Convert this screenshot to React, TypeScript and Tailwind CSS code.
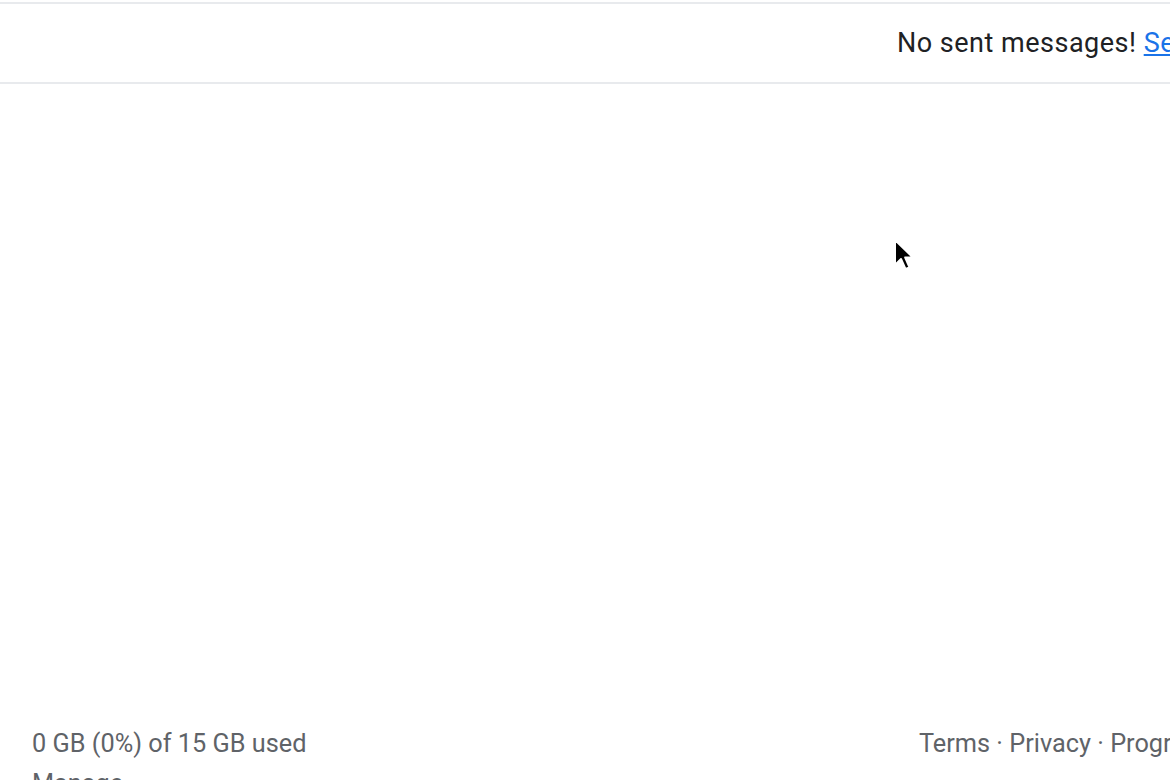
import React from 'react';

const font = { fontFamily: 'Roboto, "Noto Sans", Arial, sans-serif' };

function Cursor() {
  return (
    <svg className="absolute left-[893px] top-[238px]" width="24" height="36" viewBox="0 0 24 36">
      <path d="M2 2 L2 27 L8 21 L12.5 31 L16.5 29.3 L12.2 19.5 L20 19.5 Z" fill="#000" stroke="#fff" strokeWidth="2" strokeLinejoin="round" />
    </svg>
  );
}

export default function App() {
  return (
    <div className="relative w-[1170px] h-[780px] overflow-hidden bg-white" style={font}>
      <div className="h-[2px]" />
      <div className="h-[82px] border-t-2 border-b-2 border-[#e8eaed] flex items-center overflow-hidden">
        <p className="pl-[897px] whitespace-nowrap text-[27px] tracking-[0.5px] text-[#202124]">
          No sent messages!{' '}
          <a href="#" className="text-[#1a73e8] underline">Send one now</a>
        </p>
      </div>
      <div className="h-[640px]" />
      <div className="relative flex whitespace-nowrap text-[25.3px] text-[#5f6368] leading-[40px]">
        <div className="pl-[32px]">
          <p>0 GB (0%) of 15 GB used</p>
          <p>Manage</p>
        </div>
        <p className="absolute left-[919px] top-0">Terms · Privacy · Program Policies</p>
      </div>
      <Cursor />
    </div>
  );
}
